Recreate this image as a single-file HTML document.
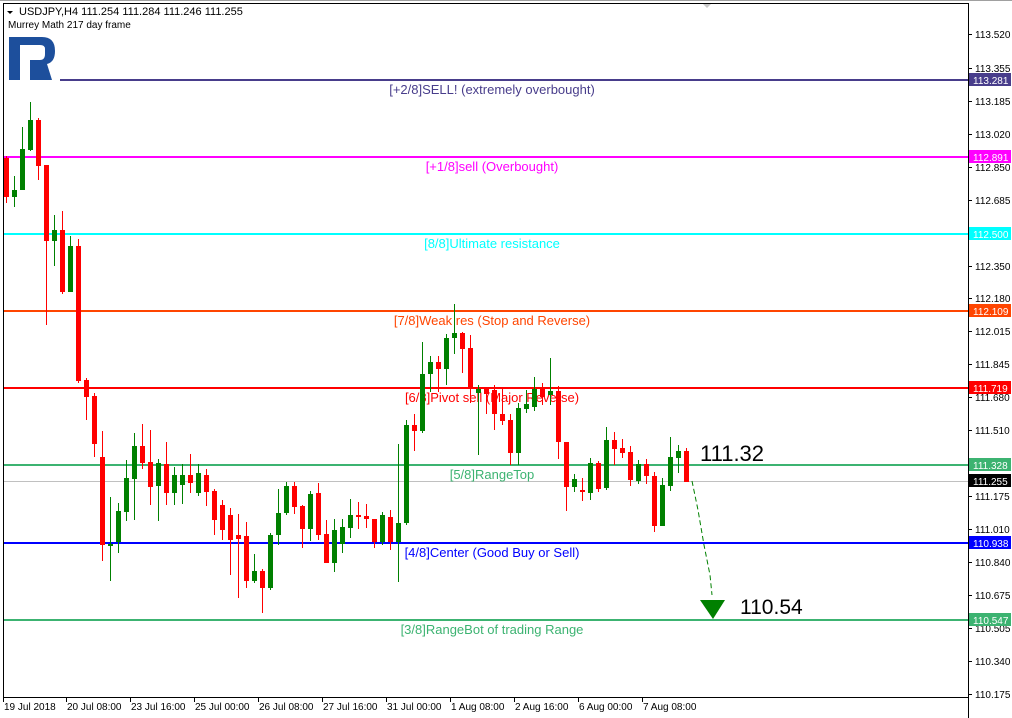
<!DOCTYPE html>
<html><head><meta charset="utf-8"><style>
html,body{margin:0;padding:0;background:#fff;width:1012px;height:718px;overflow:hidden}
svg{display:block;font-family:"Liberation Sans",Tahoma,sans-serif}
</style></head><body>
<svg id="s" width="1012" height="718" viewBox="0 0 1012 718" xmlns="http://www.w3.org/2000/svg">
<rect width="1012" height="718" fill="#fff"/>
<line x1="0" y1="0.5" x2="1012" y2="0.5" stroke="#a0a0a0"/>
<polygon points="702,3 712,3 707,8" fill="#c8c8c8"/>
<line x1="3.5" y1="3" x2="3.5" y2="697" stroke="#000"/>
<line x1="3" y1="3.5" x2="968" y2="3.5" stroke="#000"/>
<line x1="968.5" y1="3" x2="968.5" y2="718" stroke="#000"/>
<line x1="3" y1="697.5" x2="969" y2="697.5" stroke="#000"/>
<polygon points="7,11 13,11 10,14" fill="#000"/>
<text x="19" y="15" font-size="11" fill="#000">USDJPY,H4  111.254 111.284 111.246 111.255</text>
<text x="8" y="28" font-size="10" fill="#000">Murrey Math 217 day frame</text>
<path d="M9,37 H42 Q55,37 55,51 Q55,62 47,64 L52,80 H30 V60 H40 Q45,60 45,54 V49 Q45,45 40,45 H20 V80 H9 Z" fill="#1d4f9c"/>
<g id="lines"></g>
<g id="candles"></g>
<polyline points="692,481 698,510 704,545 710,575 712,595" fill="none" stroke="#008000" stroke-dasharray="5,3"/>
<polygon points="700,600 725,600 713,619" fill="#008000"/>
<text x="700" y="461" font-size="22" fill="#000">111.32</text>
<text x="740" y="614" font-size="21" fill="#000">110.54</text>
<g id="axis" font-size="10" fill="#000"></g>
</svg>
<script>
var NS="http://www.w3.org/2000/svg";
function el(p,t,a,txt){var e=document.createElementNS(NS,t);for(var k in a)e.setAttribute(k,a[k]);if(txt)e.textContent=txt;p.appendChild(e);return e;}
var L=document.getElementById("lines");
var lines=[[80,"#483d8b","[+2/8]SELL! (extremely overbought)","113.281",60],
[157,"#ff00ff","[+1/8]sell (Overbought)","112.891",4],
[234,"#00ffff","[8/8]Ultimate resistance","112.500",4],
[311,"#ff4500","[7/8]Weak res (Stop and Reverse)","112.109",4],
[388,"#ff0000","[6/8]Pivot sell (Major Reverse)","111.719",4],
[465,"#3cb371","[5/8]RangeTop","111.328",4],
[543,"#0000ff","[4/8]Center (Good Buy or Sell)","110.938",4],
[620,"#3cb371","[3/8]RangeBot of trading Range","110.547",4]];
el(L,"line",{x1:4,y1:481.5,x2:968,y2:481.5,stroke:"#c0c0c0"});
lines.forEach(function(l){
 el(L,"rect",{x:l[4],y:l[0]-1,width:968-l[4],height:2,fill:l[1]});
 el(L,"text",{x:492,y:l[0]+14,"font-size":13,fill:l[1],"text-anchor":"middle"},l[2]);
});
var C=document.getElementById("candles");
var d=[[4,158,197,156,203],[12,197,190,176,207],[20,190,149,127,190],[28,150,120,102,151],[36,120,166,118,180],[44,165,241,165,325],[52,241,230,215,266],[60,230,292,211,294],[68,292,246,236,292],[76,246,381,239,383],[84,380,397,378,420],[92,396,444,393,457],[100,457,545,431,561],[108,545,544,497,581],[116,542,511,503,553],[124,512,478,460,521],[132,479,446,433,520],[140,446,463,424,469],[148,462,487,430,505],[156,486,463,459,521],[164,464,493,442,505],[172,493,475,467,505],[180,485,475,464,504],[188,475,483,454,493],[196,493,473,464,496],[204,475,492,469,506],[212,491,520,489,535],[220,505,530,500,540],[228,515,540,508,575],[236,535,539,514,598],[244,536,581,522,588],[252,581,571,554,583],[260,571,588,569,613],[268,588,535,533,590],[276,535,513,489,545],[284,513,486,482,515],[292,486,507,482,514],[300,506,529,505,548],[308,529,494,491,541],[316,493,535,483,540],[324,534,563,520,563],[332,563,530,519,572],[340,544,527,519,553],[348,528,515,499,538],[356,515,516,502,529],[364,516,519,504,528],[372,519,542,519,548],[380,542,515,512,545],[388,517,542,510,550],[396,542,523,444,582],[404,523,425,420,525],[412,425,431,414,451],[420,431,374,342,433],[428,374,362,356,392],[436,362,369,356,392],[444,369,338,334,385],[452,338,333,304,354],[460,333,349,332,373],[468,348,389,335,403],[476,393,389,385,455],[484,389,394,387,414],[492,390,414,385,430],[500,414,421,387,425],[508,420,453,414,465],[516,453,408,403,465],[524,409,404,390,413],[532,407,389,377,411],[540,389,397,383,405],[548,395,391,358,405],[556,391,442,386,459],[564,442,487,442,511],[572,487,479,474,492],[580,490,492,478,501],[588,493,463,458,500],[596,463,489,461,492],[604,488,440,427,490],[612,440,449,432,465],[620,448,453,439,458],[628,452,480,446,486],[636,481,464,460,484],[644,464,476,459,484],[652,476,526,472,532],[660,526,485,478,526],[668,486,457,437,491],[676,458,451,445,473],[684,451,482,448,482]];
d.forEach(function(c){
 var col=c[2]<c[1]?"#008000":"#ff0000";
 el(C,"rect",{x:c[0]+2,y:c[3],width:1,height:c[4]-c[3],fill:col});
 var t=Math.min(c[1],c[2]),b=Math.max(c[1],c[2]);if(b-t<2)b=t+2;
 el(C,"rect",{x:c[0],y:t,width:5,height:b-t,fill:col});
});
var A=document.getElementById("axis");
[[34,"113.520"],[68,"113.355"],[101,"113.185"],[134,"113.020"],[167,"112.850"],[200,"112.685"],[266,"112.350"],[298,"112.180"],[331,"112.015"],[364,"111.845"],[397,"111.680"],[430,"111.510"],[496,"111.175"],[529,"111.010"],[562,"110.840"],[595,"110.675"],[628,"110.505"],[661,"110.340"],[694,"110.175"]].forEach(function(t){
 el(A,"line",{x1:968,y1:t[0]+.5,x2:972,y2:t[0]+.5,stroke:"#000"});
 el(A,"text",{x:975,y:t[0]+4},t[1]);
});
lines.forEach(function(l){
 el(A,"rect",{x:969,y:l[0]-7,width:42,height:13,fill:l[1]});
 el(A,"text",{x:973,y:l[0]+4,fill:"#fff"},l[3]);
});
el(A,"rect",{x:969,y:474,width:42,height:13,fill:"#000"});
el(A,"text",{x:973,y:485,fill:"#fff"},"111.255");
[[4,"19 Jul 2018"],[67,"20 Jul 08:00"],[131,"23 Jul 16:00"],[195,"25 Jul 00:00"],[259,"26 Jul 08:00"],[323,"27 Jul 16:00"],[387,"31 Jul 00:00"],[451,"1 Aug 08:00"],[515,"2 Aug 16:00"],[579,"6 Aug 00:00"],[643,"7 Aug 08:00"]].forEach(function(t){
 el(A,"line",{x1:t[0]-0.5,y1:697,x2:t[0]-0.5,y2:702,stroke:"#000"});
 el(A,"text",{x:t[0],y:710},t[1]);
});
</script>
</body></html>
